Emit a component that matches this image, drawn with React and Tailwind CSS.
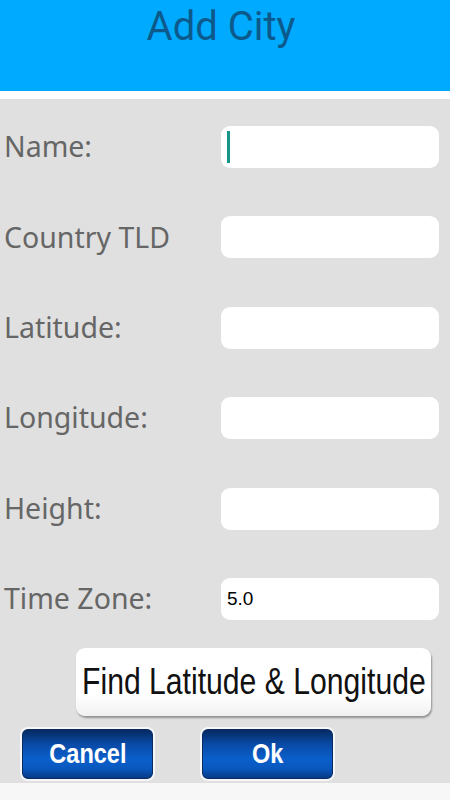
const fields = [
  { label: 'Name:', value: '', focused: true },
  { label: 'Country TLD', value: '' },
  { label: 'Latitude:', value: '' },
  { label: 'Longitude:', value: '' },
  { label: 'Height:', value: '' },
  { label: 'Time Zone:', value: '5.0' },
]

function BlueButton({ children }) {
  return (
    <button className="flex h-[54px] w-[135px] items-center justify-center rounded-[8px] border-2 border-[#f4f6fa] bg-[linear-gradient(to_bottom,#05275c_0%,#0a4aa6_30%,#0a5fcb_60%,#0957bd_80%,#053780_100%)] shadow-[0_0_0_1px_#0b2b5c_inset]">
      <span className="inline-block scale-x-[0.84] font-['Liberation_Sans',Arial,sans-serif] text-[28px] font-bold text-white">{children}</span>
    </button>
  )
}

export default function App() {
  return (
    <div className="flex h-[800px] w-[450px] flex-col overflow-hidden bg-[#f7f7f7]">
      <header className="h-[91px] shrink-0 bg-[#00aaff] pr-[8px] pt-[3px] text-center font-['Roboto',sans-serif] text-[40px] leading-[48px] text-[#0c5a8c]">
        Add City
      </header>
      <div className="h-[8px] shrink-0 bg-white" />
      <main className="flex h-[684px] shrink-0 flex-col bg-[#e0e0e0] pt-[27px]">
        <div className="flex flex-col gap-[48.4px]">
          {fields.map((field) => (
            <div className="flex h-[42px] items-center" key={field.label}>
              <label className="w-[221px] pb-[1px] pl-[4px] font-['Noto_Sans',sans-serif] text-[28.5px] text-[#666666]">{field.label}</label>
              <div className="flex h-[42px] w-[218px] items-center rounded-[9px] bg-white px-[6px]">
                {field.focused && <span className="h-[32px] w-[3px] bg-[#159487]" />}
                {field.value && <span className="font-['Liberation_Sans',Arial,sans-serif] text-[19px] text-black">{field.value}</span>}
              </div>
            </div>
          ))}
        </div>
        <div className="mt-[28px] pl-[76px]">
          <button className="flex h-[68px] w-[355px] items-center justify-center rounded-[9px] bg-[linear-gradient(to_bottom,#ffffff_0%,#ffffff_70%,#f0f0f0_100%)] shadow-[1px_2px_2px_rgba(0,0,0,0.35)]">
            <span className="inline-block scale-x-[0.815] whitespace-nowrap font-['Liberation_Sans',Arial,sans-serif] text-[37px] text-[#111111]">Find Latitude &amp; Longitude</span>
          </button>
        </div>
        <div className="mt-[11px] flex gap-[45px] pl-[20px]">
          <BlueButton>Cancel</BlueButton>
          <BlueButton>Ok</BlueButton>
        </div>
      </main>
    </div>
  )
}
